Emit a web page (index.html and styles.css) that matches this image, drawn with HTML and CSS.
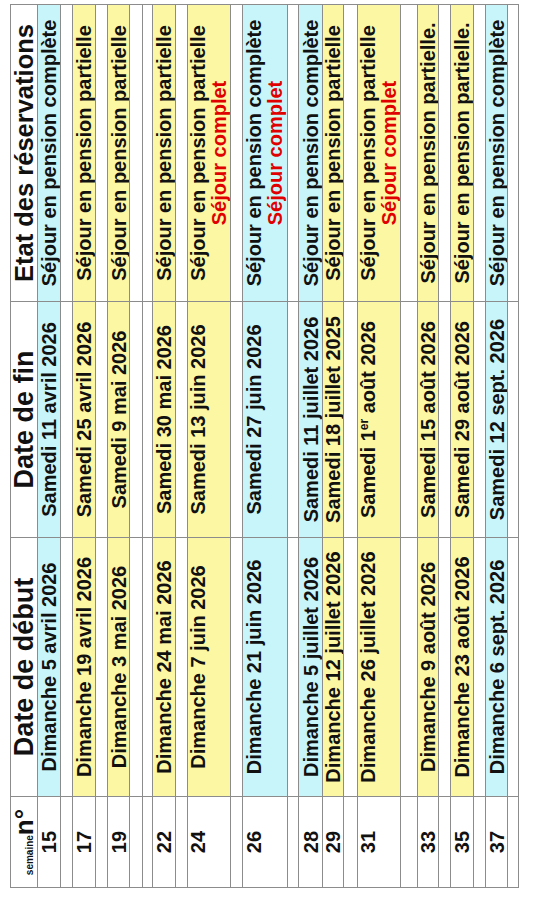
FILE: index.html
```html
<!DOCTYPE html>
<html lang="fr">
<head>
<meta charset="utf-8">
<title>Etat des réservations</title>
<link rel="stylesheet" href="styles.css">
</head>
<body>
<div class="page">
  <table class="sheet">
    <colgroup>
      <col class="c-week">
      <col class="c-start">
      <col class="c-end">
      <col class="c-state">
    </colgroup>
    <tr class="head">
      <th class="week-h"><span class="small">semaine</span><span class="big">n°</span></th>
      <th>Date de début</th>
      <th>Date de fin</th>
      <th class="state-h">Etat des réservations</th>
    </tr>
    <tr class="r23"><td>15</td><td class="cy">Dimanche 5 avril 2026</td><td class="cy">Samedi 11 avril 2026</td><td class="cy">Séjour en pension complète</td></tr>
    <tr class="g12"><td></td><td></td><td></td><td></td></tr>
    <tr class="r23"><td>17</td><td class="ye">Dimanche 19 avril 2026</td><td class="ye">Samedi 25 avril 2026</td><td class="ye">Séjour en pension partielle</td></tr>
    <tr class="g12"><td></td><td></td><td></td><td></td></tr>
    <tr class="r22"><td>19</td><td class="ye">Dimanche 3 mai 2026</td><td class="ye">Samedi 9 mai 2026</td><td class="ye">Séjour en pension partielle</td></tr>
    <tr class="g13"><td></td><td></td><td></td><td></td></tr>
    <tr class="g10"><td></td><td></td><td></td><td></td></tr>
    <tr class="r23"><td>22</td><td class="ye">Dimanche 24 mai 2026</td><td class="ye">Samedi 30 mai 2026</td><td class="ye">Séjour en pension partielle</td></tr>
    <tr class="g12"><td></td><td></td><td></td><td></td></tr>
    <tr class="r43"><td>24</td><td class="ye">Dimanche 7 juin 2026</td><td class="ye">Samedi 13 juin 2026</td><td class="ye">Séjour en pension partielle<br><span class="full">Séjour complet</span></td></tr>
    <tr class="g12"><td></td><td></td><td></td><td></td></tr>
    <tr class="r45"><td>26</td><td class="cy">Dimanche 21 juin 2026</td><td class="cy">Samedi 27 juin 2026</td><td class="cy">Séjour en pension complète<br><span class="full">Séjour complet</span></td></tr>
    <tr class="g11"><td></td><td></td><td></td><td></td></tr>
    <tr class="r24"><td>28</td><td class="cy">Dimanche 5 juillet 2026</td><td class="cy">Samedi 11 juillet 2026</td><td class="cy">Séjour en pension complète</td></tr>
    <tr class="r21"><td>29</td><td class="ye">Dimanche 12 juillet 2026</td><td class="ye">Samedi 18 juillet 2025</td><td class="ye">Séjour en pension partielle</td></tr>
    <tr class="g14"><td></td><td></td><td></td><td></td></tr>
    <tr class="r43"><td>31</td><td class="ye">Dimanche 26 juillet 2026</td><td class="ye">Samedi 1<sup>er</sup> août 2026</td><td class="ye">Séjour en pension partielle<br><span class="full">Séjour complet</span></td></tr>
    <tr class="g17"><td></td><td></td><td></td><td></td></tr>
    <tr class="r21"><td>33</td><td class="ye">Dimanche 9 août 2026</td><td class="ye">Samedi 15 août 2026</td><td class="ye">Séjour en pension partielle.</td></tr>
    <tr class="g12"><td></td><td></td><td></td><td></td></tr>
    <tr class="r23"><td>35</td><td class="ye">Dimanche 23 août 2026</td><td class="ye">Samedi 29 août 2026</td><td class="ye">Séjour en pension partielle.</td></tr>
    <tr class="g12"><td></td><td></td><td></td><td></td></tr>
    <tr class="r22"><td>37</td><td class="cy">Dimanche 6 sept. 2026</td><td class="cy">Samedi 12 sept. 2026</td><td class="cy">Séjour en pension complète</td></tr>
    <tr class="g11"><td></td><td></td><td></td><td></td></tr>
  </table>
</div>
</body>
</html>
```

FILE: styles.css
```css
html, body {
  margin: 0;
  padding: 0;
  background: #ffffff;
}

.page {
  width: 535px;
  height: 900px;
  overflow: hidden;
  background: #ffffff;
}

.sheet {
  width: 883px;
  table-layout: fixed;
  border-collapse: collapse;
  border: 1px solid #6e6e6e;
  transform-origin: 0 0;
  transform: translate(10px, 888px) rotate(-90deg);
  font-family: "Liberation Sans", Arial, sans-serif;
  font-weight: bold;
  color: #111111;
}

.c-week { width: 91px; }
.c-start { width: 259px; }
.c-end { width: 236px; }
.c-state { width: 297px; }

.sheet th,
.sheet td {
  border: 1px solid #8c8c8c;
  padding: 0;
  text-align: center;
  white-space: nowrap;
  overflow: hidden;
}

.sheet td {
  font-size: 20px;
  line-height: 21px;
  vertical-align: top;
}

.head th {
  height: 26px;
  font-size: 27px;
  line-height: 26px;
  vertical-align: middle;
  font-weight: bold;
}

.head .state-h {
  font-size: 25.5px;
}

.week-h .small {
  font-size: 10px;
  line-height: 1;
}

.week-h .big {
  font-size: 26px;
  line-height: 1;
}

.r21 td { height: 20px; line-height: 20px; }
.r22 td { height: 20px; line-height: 20px; padding-top: 1px; }
.r23 td { height: 21px; padding-top: 1px; }
.r24 td { height: 21px; padding-top: 2px; }
.r43 td { height: 42px; }
.r45 td { height: 43px; padding-top: 1px; }

.g10 td { height: 9px; }
.g11 td { height: 10px; }
.g12 td { height: 11px; }
.g13 td { height: 12px; }
.g14 td { height: 13px; }
.g17 td { height: 16px; }

.cy { background: #c8f5fa; }
.ye { background: #fcf7a3; }

.full {
  color: #e00000;
}

sup {
  font-size: 12px;
  line-height: 0;
  vertical-align: 7px;
}
```
